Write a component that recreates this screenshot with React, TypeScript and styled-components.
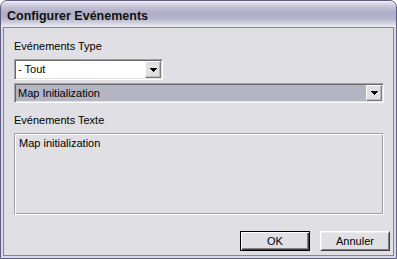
import React from "react";
import styled, { createGlobalStyle } from "styled-components";

const GlobalStyle = createGlobalStyle`
  html, body {
    margin: 0;
    padding: 0;
    background: #ffffff;
  }
  body {
    font-family: "Liberation Sans", Arial, sans-serif;
    font-size: 11px;
    color: #000;
  }
`;

const App: React.FC = () => {
  return (
    <>
      <GlobalStyle />
      <Window>
        <TitleBar>Configurer Evénements</TitleBar>
        <Client>
          <Label $top={12}>Evénements Type</Label>
          <Combo $top={6} $width={149} $height={21}>
            <ComboText>- Tout</ComboText>
            <DropButton>
              <Arrow />
            </DropButton>
          </Combo>
          <Combo $top={3} $height={20} $tone="#b4b5c3">
            <ComboText>Map Initialization</ComboText>
            <DropButton>
              <Arrow />
            </DropButton>
          </Combo>
          <Label $top={11}>Evénements Texte</Label>
          <TextBox>Map initialization</TextBox>
          <Footer>
            <Button $primary>OK</Button>
            <Button>Annuler</Button>
          </Footer>
        </Client>
      </Window>
    </>
  );
};
export default App;

const Arrow: React.FC = () => (
  <svg width="7" height="4" viewBox="0 0 7 4" shapeRendering="crispEdges">
    <rect x="0" y="0" width="7" height="1" fill="#000" />
    <rect x="1" y="1" width="5" height="1" fill="#000" />
    <rect x="2" y="2" width="3" height="1" fill="#000" />
    <rect x="3" y="3" width="1" height="1" fill="#000" />
  </svg>
);

const Window = styled.div`
  width: 397px;
  height: 259px;
  box-sizing: border-box;
  border: 1px solid #5f5e80;
  border-radius: 7px 7px 0 0;
  background: #d9d8e6;
  display: flex;
  flex-direction: column;
  overflow: hidden;
`;

const TitleBar = styled.div`
  height: 26px;
  flex: none;
  box-sizing: border-box;
  padding: 8px 0 0 6px;
  border-radius: 6px 6px 0 0;
  background: linear-gradient(
    to bottom,
    #f6f6fa 0px,
    #dddce7 2px,
    #c3c2d5 6px,
    #aeadc6 12px,
    #b8b7cd 18px,
    #d9d8e5 23px,
    #eeeef4 26px
  );
  font-size: 12.5px;
  font-weight: bold;
  line-height: 14px;
  color: #111;
  white-space: nowrap;
`;

const Client = styled.div`
  flex: 1;
  min-height: 0;
  margin: 0 2px 2px;
  border: 1px solid #8483a3;
  background: #e0dfe3;
  display: flex;
  flex-direction: column;
  padding: 12px 9px 0 10px;
`;

const Label = styled.div<{ $top: number }>`
  margin-top: ${(p) => p.$top - (p.$top === 12 ? 12 : 0)}px;
  line-height: 13px;
  white-space: nowrap;
`;

const Combo = styled.div<{ $top: number; $width?: number; $height: number; $tone?: string }>`
  margin-top: ${(p) => p.$top}px;
  width: ${(p) => (p.$width ? `${p.$width}px` : "auto")};
  height: ${(p) => p.$height}px;
  box-sizing: border-box;
  display: flex;
  padding: 1px;
  border: 1px solid;
  border-color: #a0a0a0 #ffffff #ffffff #a0a0a0;
  box-shadow: inset 1px 1px #696969, inset -1px -1px #e3e3e3;
  background: ${(p) => p.$tone ?? "#ffffff"};
`;

const ComboText = styled.div`
  flex: 1;
  display: flex;
  align-items: center;
  padding-left: 2px;
  white-space: nowrap;
  line-height: 13px;
`;

const DropButton = styled.div`
  width: 16px;
  flex: none;
  box-sizing: border-box;
  display: flex;
  align-items: center;
  justify-content: center;
  background: #e0dfe3;
  border: 1px solid;
  border-color: #ffffff #7c7c7c #7c7c7c #ffffff;
  box-shadow: inset -1px -1px #b8b8b8;
`;

const TextBox = styled.div`
  margin-top: 6px;
  height: 82px;
  box-sizing: border-box;
  padding: 3px 4px;
  border: 1px solid;
  border-color: #a0a0a0 #ffffff #ffffff #a0a0a0;
  box-shadow: inset 1px 1px #ffffff, inset -1px -1px #a0a0a0;
  line-height: 13px;
`;

const Footer = styled.div`
  margin-top: auto;
  margin-right: -6px;
  margin-bottom: 4px;
  display: flex;
  justify-content: flex-end;
  gap: 10px;
`;

const Button = styled.div<{ $primary?: boolean }>`
  width: 70px;
  height: 20px;
  box-sizing: border-box;
  display: flex;
  align-items: center;
  justify-content: center;
  background: #e0dfe3;
  line-height: 13px;
  border: 1px solid;
  border-color: ${(p) => (p.$primary ? "#000000" : "#ffffff #404040 #404040 #ffffff")};
  box-shadow: ${(p) =>
    p.$primary
      ? "inset 1px 1px #ffffff, inset -1px -1px #404040, inset -2px -2px #808080"
      : "inset 1px 1px #f0f0f0, inset -1px -1px #808080"};
`;
